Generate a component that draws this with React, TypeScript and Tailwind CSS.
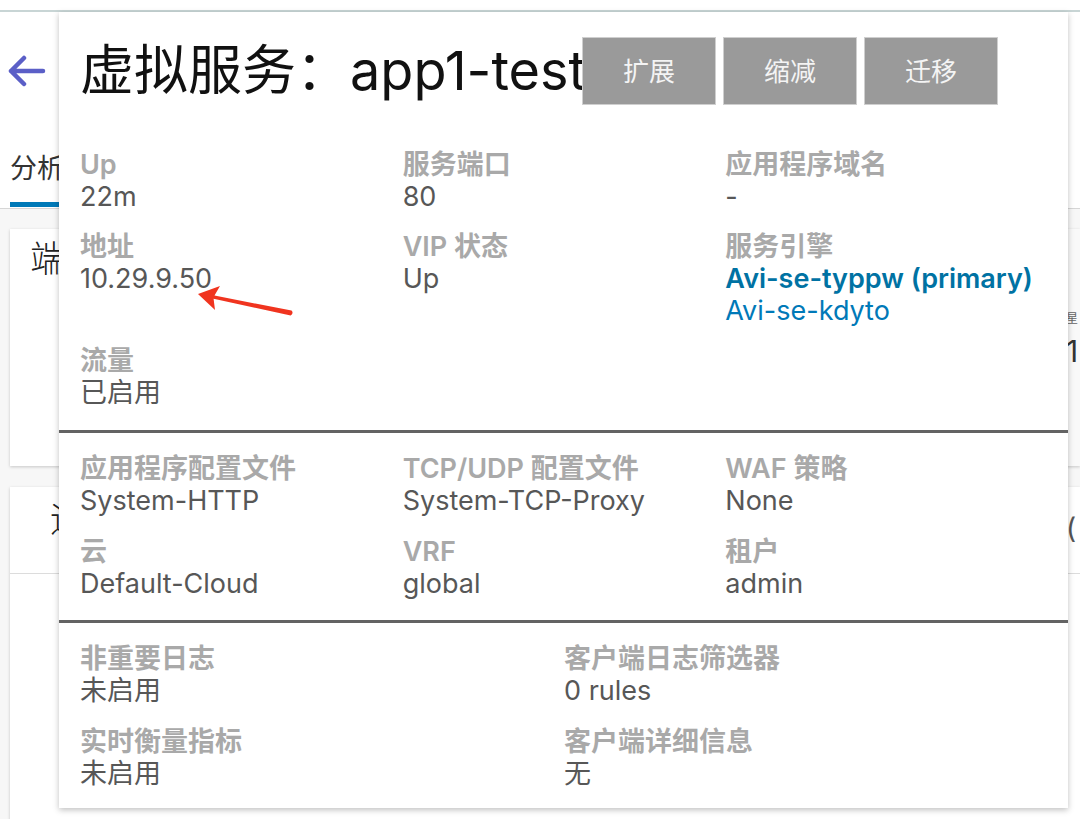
import React from 'react';

type Item = { label: string; value?: React.ReactNode };

const general: Item[] = [
    { label: 'Up', value: '22m' },
    { label: '服务端口', value: '80' },
    { label: '应用程序域名', value: '-' },
    { label: '地址', value: '10.29.9.50' },
    { label: 'VIP 状态', value: 'Up' },
    {
        label: '服务引擎',
        value: (
            <>
                <div className="font-semibold text-[#0072a3]">Avi-se-typpw (primary)</div>
                <div className="text-[#0079b8]">Avi-se-kdyto</div>
            </>
        ),
    },
    { label: '流量', value: '已启用' },
];

const profiles: Item[] = [
    { label: '应用程序配置文件', value: 'System-HTTP' },
    { label: 'TCP/UDP 配置文件', value: 'System-TCP-Proxy' },
    { label: 'WAF 策略', value: 'None' },
    { label: '云', value: 'Default-Cloud' },
    { label: 'VRF', value: 'global' },
    { label: '租户', value: 'admin' },
];

const logs: Item[] = [
    { label: '非重要日志', value: '未启用' },
    { label: '客户端日志筛选器', value: '0 rules' },
    { label: '实时衡量指标', value: '未启用' },
    { label: '客户端详细信息', value: '无' },
];

function Field({ label, value }: Item) {
    return (
        <div className="text-[27px] leading-[32px] whitespace-nowrap">
            <div className="font-semibold text-[#a9a9a9]">{label}</div>
            <div className="text-[#575757]">{value}</div>
        </div>
    );
}

export default function App() {
    return (
        <div className="relative w-[1080px] h-[819px] overflow-hidden bg-white font-['Inter','Noto_Sans_CJK_SC',sans-serif]">
            {/* page behind the popup */}
            <div className="h-[10px]"></div>
            <div className="h-[2px] bg-[#c8d5d5]"></div>
            <div className="h-[196px] flex flex-col pl-[8px]">
                <svg className="mt-[43px] w-[38px] h-[32px]" viewBox="0 0 38 32" fill="none" stroke="#5b5fc7" strokeWidth={4.5} strokeLinecap="round" strokeLinejoin="round">
                    <path d="M3 16h32M3 16L16 3M3 16l13 13" />
                </svg>
                <div className="mt-[66px] pl-[2px] text-[27px] leading-[32px] text-[#333]">分析</div>
                <div className="mt-[17px] ml-[2px] w-[60px] h-[5px] bg-[#0079b8]"></div>
            </div>
            <div className="h-px bg-[#d6d6d6]"></div>
            <div className="h-full bg-[#f7f7f7] pl-[10px] pt-[20px] flex flex-col gap-[21px]">
                <div className="h-[237px] bg-white shadow-[0_1px_3px_rgba(0,0,0,0.2)] flex">
                    <div className="pl-[20px] pt-[6px] text-[36px] leading-[48px] text-[#222] font-light">端口</div>
                    <div className="ml-auto w-[14px] bg-[#f9f9f9] pt-[78px]">
                        <div className="text-[12px] leading-[24px] text-[#666]">星</div>
                        <div className="text-[30px] leading-[40px] text-[#333]">1</div>
                    </div>
                </div>
                <div className="bg-white shadow-[0_1px_3px_rgba(0,0,0,0.2)] h-[400px]">
                    <div className="h-[87px] flex border-b border-[#dcdcdc]">
                        <div className="pl-[40px] pt-[8px] text-[36px] leading-[48px] text-[#222] font-light">运行</div>
                        <div className="ml-auto w-[14px] pt-[24px] text-[28px] leading-[34px] text-[#555]">(</div>
                    </div>
                </div>
            </div>

            {/* popup card */}
            <div className="absolute left-[59px] top-[12px] w-[1009px] bg-white shadow-[0_2px_6px_rgba(0,0,0,0.25)]">
                <div className="flex items-center pl-[21px] pt-[25px] h-[93px]">
                    <div className="w-[502px] whitespace-nowrap text-[54px] leading-[68px] text-[#111]">虚拟服务：app1-test</div>
                    <div className="flex gap-[7px]">
                        {['扩展', '缩减', '迁移'].map(t => (
                            <div key={t} className="w-[134px] h-[68px] flex items-center justify-center bg-[#9a9a9a] border border-[#cfcfcf] text-[26px] text-[#f4f4f4]">
                                {t}
                            </div>
                        ))}
                    </div>
                </div>

                <div className="grid grid-cols-3 gap-y-[18px] pl-[21px] pr-[20px] pt-[44px] pb-[21px]">
                    {general.map(f => <Field key={f.label} {...f} />)}
                </div>
                <div className="h-[3px] bg-[#636363]"></div>

                <div className="grid grid-cols-3 gap-y-[19px] pl-[21px] pr-[20px] pt-[20px] pb-[20px]">
                    {profiles.map(f => <Field key={f.label} {...f} />)}
                </div>
                <div className="h-[3px] bg-[#636363]"></div>

                <div className="grid grid-cols-2 gap-y-[19px] pl-[21px] pr-[20px] pt-[20px] pb-[18px]">
                    {logs.map(f => <Field key={f.label} {...f} />)}
                </div>
            </div>

            {/* red annotation arrow */}
            <svg className="absolute left-0 top-0 w-[1080px] h-[819px] pointer-events-none" viewBox="0 0 1080 819">
                <path
                    d="M198 294 L220 286 L214.5 295.6 L291.5 310.6 Q294 313.2 290.6 315.6 L213.6 298.8 L215 310 Z"
                    fill="#f0341f"
                />
            </svg>
        </div>
    );
}
